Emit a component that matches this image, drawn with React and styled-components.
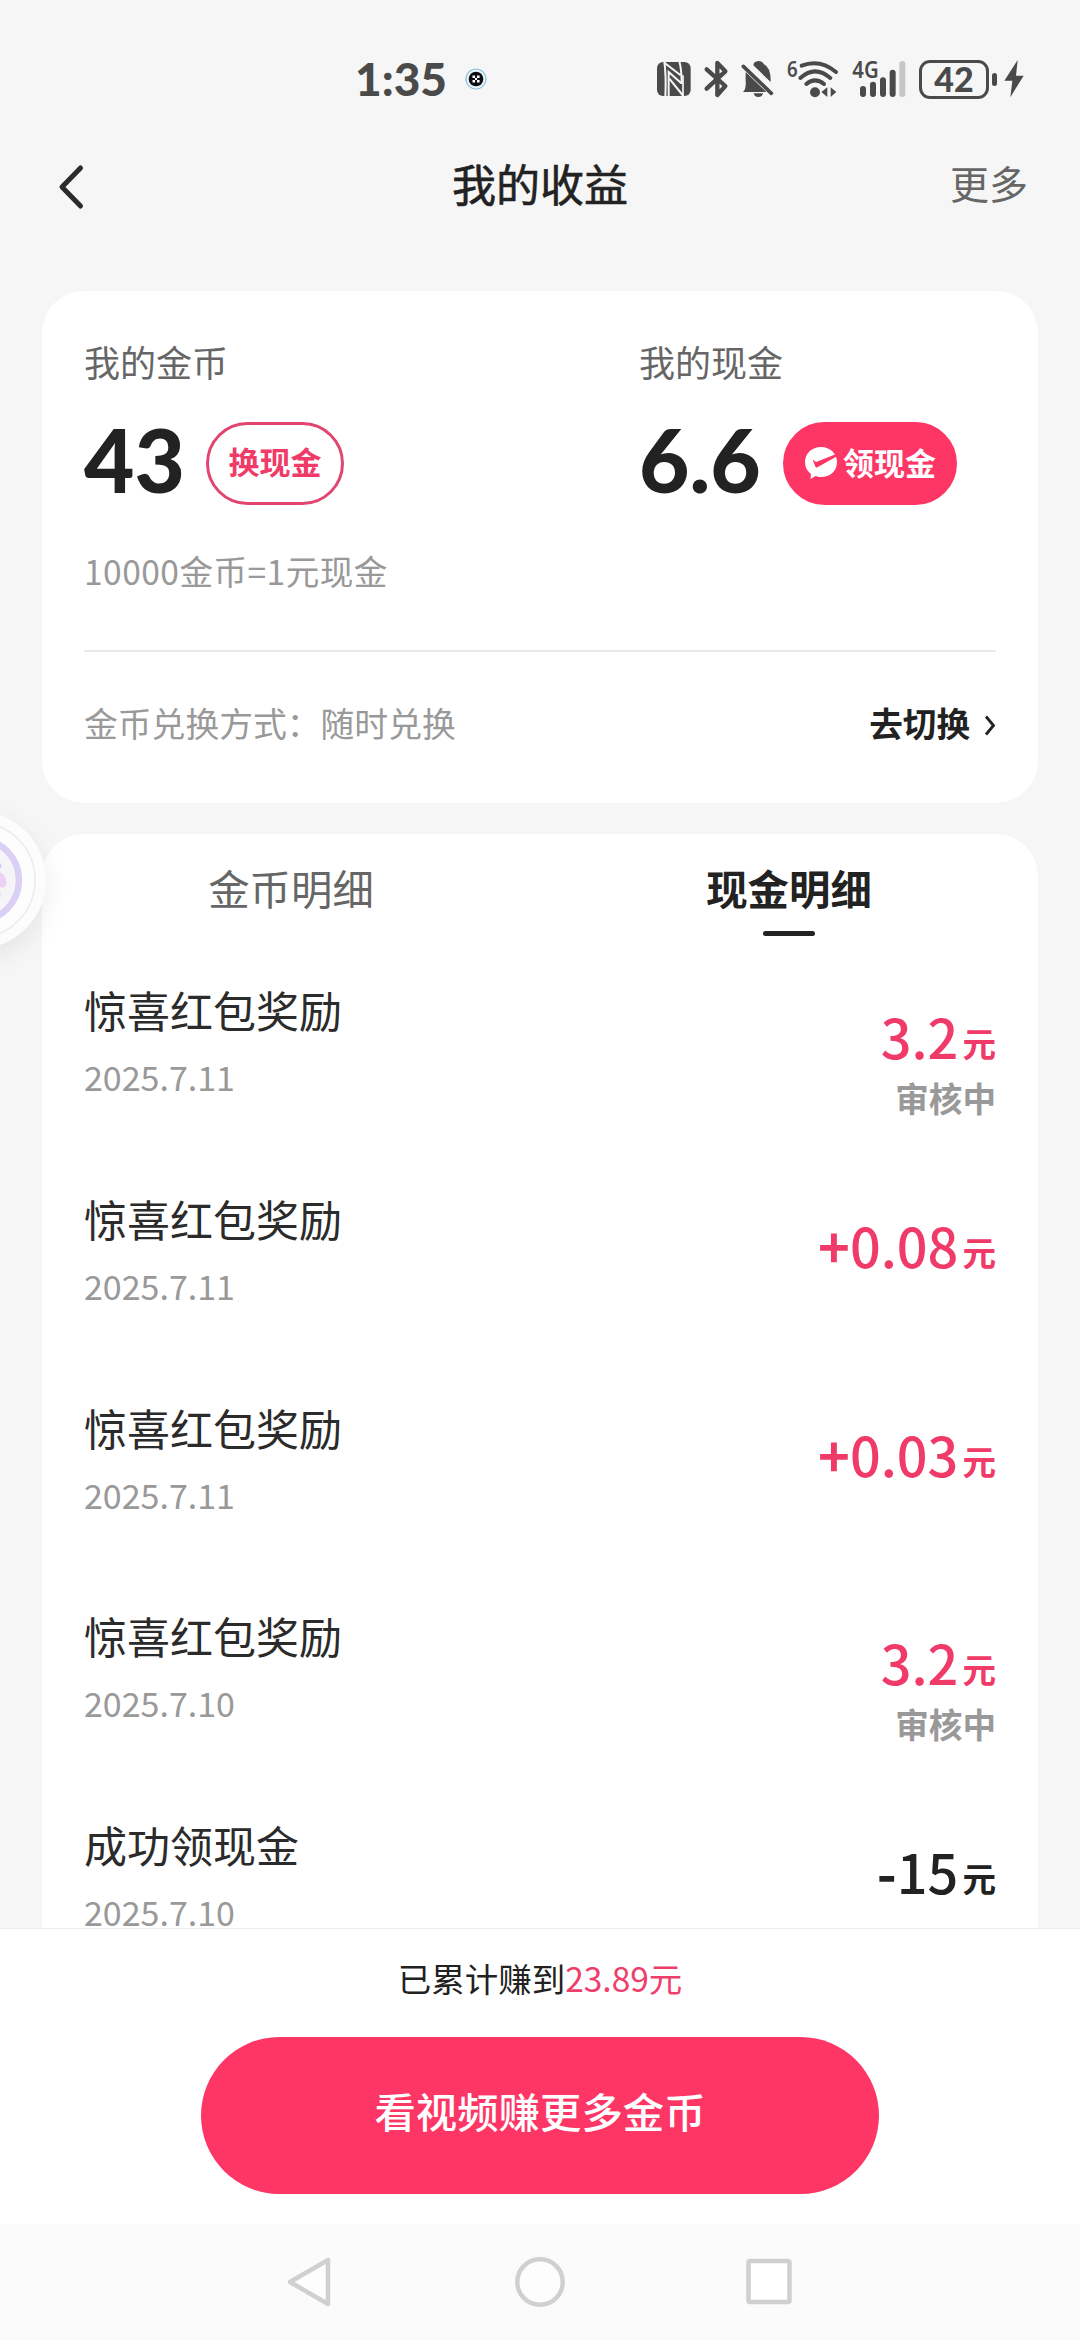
import React from "react";
import styled, { createGlobalStyle } from "styled-components";

const GlobalStyle = createGlobalStyle`
  * {
    box-sizing: border-box;
  }

  body {
    margin: 0;
    background: #f6f6f6;
    font-family: "Noto Sans CJK SC", "Noto Sans", sans-serif;
    color: #222;
  }

  button {
    border: 0;
    padding: 0;
    background: none;
    font-family: inherit;
    color: inherit;
  }

  svg {
    display: block;
    flex: none;
    overflow: visible;
  }
`;

const Page = styled.div`
  width: 1080px;
  height: 2340px;
  display: flex;
  flex-direction: column;
  overflow: hidden;
  background: #f6f6f6;
`;

const StatusBar = styled.div`
  height: 138px;
  padding: 59px 56px 0 355px;
  display: flex;
  align-items: flex-start;
  justify-content: space-between;
`;

const StatusLeft = styled.div`
  display: flex;
  align-items: center;
  gap: 18px;
  height: 40px;
`;

const Clock = styled.div`
  font-family: "Lato", sans-serif;
  font-weight: 900;
  font-size: 46px;
  line-height: 40px;
  color: #4a4a4a;
`;

const StatusIcons = styled.div`
  display: flex;
  gap: 13px;
`;

const Header = styled.div`
  height: 96px;
  padding: 0 52px;
  display: grid;
  grid-template-columns: 1fr auto 1fr;
  align-items: center;
`;

const BackBtn = styled.button`
  justify-self: start;
  margin-left: 4px;
`;

const Title = styled.div`
  font-size: 44px;
  line-height: 60px;
  padding-bottom: 6px;
  -webkit-text-stroke: 0.6px #222;
  color: #222;
`;

const MoreBtn = styled.button`
  justify-self: end;
  font-size: 39px;
  line-height: 60px;
  padding-bottom: 9px;
  color: #666;
`;

const Card = styled.div`
  margin: 0 42px;
  background: #fff;
  border-radius: 42px;
`;

const BalanceCard = styled(Card)`
  height: 512px;
  margin-top: 57px;
  padding: 46px 42px 0;
`;

const Balances = styled.div`
  display: grid;
  grid-template-columns: 555px 1fr;
  height: 171px;
`;

const BalanceLabel = styled.div`
  font-size: 36px;
  line-height: 48px;
  color: #666;
`;

const BalanceRow = styled.div`
  display: flex;
  align-items: center;
  height: 84px;
  margin-top: 36px;
`;

const BalanceValue = styled.div`
  font-family: "Lato", sans-serif;
  font-weight: 900;
  font-size: 87px;
  line-height: 84px;
  height: 90px;
  color: #222;
  width: ${({ $width }) => $width}px;
`;

const PillBtn = styled.button`
  height: 83px;
  width: ${({ $filled }) => ($filled ? 174 : 138)}px;
  border-radius: 42px;
  border: 3px solid ${({ $filled }) => ($filled ? "#fe3666" : "#e2456f")};
  background: ${({ $filled }) => ($filled ? "#fe3666" : "#fff")};
  color: ${({ $filled }) => ($filled ? "#fff" : "#f03a68")};
  font-size: 31px;
  font-weight: 700;
  display: flex;
  justify-content: center;
  align-items: center;
  gap: 5px;

  span {
    padding-bottom: ${({ $filled }) => ($filled ? 3 : 5)}px;
  }
`;

const RateHint = styled.div`
  font-size: 33.6px;
  line-height: 48px;
  margin-top: 39px;
  letter-spacing: 0.45px;
  color: #999;
`;

const ExchangeRow = styled.div`
  display: flex;
  justify-content: space-between;
  align-items: center;
  margin-top: 55px;
  height: 142px;
  border-top: 2px solid #e9e9e9;
  font-size: 33.8px;
  color: #999;
`;

const SwitchBtn = styled.button`
  display: flex;
  align-items: center;
  gap: 14px;
  font-size: 33.6px;
  font-weight: 700;
  color: #222;

  svg {
    margin-top: 6px;
  }
`;

const DetailCard = styled(Card)`
  margin-top: 31px;
  height: 1094px;
  border-radius: 42px 42px 0 0;
  overflow: hidden;
`;

const Tabs = styled.div`
  display: grid;
  grid-template-columns: 1fr 1fr;
  height: 110px;
`;

const Tab = styled.button`
  display: flex;
  flex-direction: column;
  align-items: center;
  padding-top: 23px;
  font-size: 41.4px;
  line-height: 60px;
  font-weight: ${({ $active }) => ($active ? 700 : 400)};
  color: ${({ $active }) => ($active ? "#222" : "#666")};

  &::after {
    content: "";
    display: ${({ $active }) => ($active ? "block" : "none")};
    width: 52px;
    height: 5px;
    margin-top: 14px;
    border-radius: 3px;
    background: #222;
  }
`;

const RecordRow = styled.div`
  display: flex;
  justify-content: space-between;
  height: 208.8px;
  padding: 35px 42px 0;
`;

const RecordName = styled.div`
  font-size: 43px;
  line-height: 60px;
  color: #2b2b2b;
`;

const RecordDate = styled.div`
  font-size: 34px;
  line-height: 40px;
  margin-top: 18px;
  color: #999;
`;

const RecordSide = styled.div`
  padding-top: 27px;
  text-align: right;
`;

const Amount = styled.div`
  font-size: 54px;
  line-height: 60px;
  font-weight: 500;
  color: ${({ $out }) => ($out ? "#222" : "#f03a68")};
`;

const Sign = styled.span`
  font-weight: 700;
`;

const Unit = styled.span`
  font-size: 33.6px;
  line-height: 1;
  font-weight: 700;
  margin-left: 4px;
  vertical-align: 2px;
`;

const RecordStatus = styled.div`
  font-size: 33.6px;
  line-height: 40px;
  font-weight: 700;
  margin-top: 12px;
  color: #999;
`;

const Footer = styled.div`
  height: 296px;
  border-top: 1px solid #ececec;
  background: #fff;
  display: flex;
  flex-direction: column;
  align-items: center;
  padding-top: 24px;
`;

const TotalText = styled.div`
  font-size: 33.5px;
  line-height: 50px;
  color: #222;

  span {
    color: #ee3f6c;
  }
`;

const WatchBtn = styled.button`
  width: 678px;
  height: 157px;
  margin-top: 34px;
  padding-bottom: 12px;
  border-radius: 79px;
  background: #fe3666;
  color: #fff;
  font-size: 41.4px;
  font-weight: 500;
`;

const NavBar = styled.div`
  height: 116px;
  background: #fbfbfb;
  display: flex;
  justify-content: center;
  padding-top: 32px;
  gap: 180px;
`;

// sits over the left edge of the page, half hidden
const FloatBall = styled.div`
  position: absolute;
  left: -92px;
  top: 811px;
  width: 138px;
  height: 138px;
  border-radius: 50%;
  background: #fcfcfc;
  box-shadow: 0 8px 26px rgba(0, 0, 0, 0.08);
`;

const DARK = "#4a4a4a";

const AppDot = () => (
  <svg width="22" height="22" viewBox="0 0 22 22">
    <circle cx="11" cy="11" r="10" fill="#e8f3f8" stroke="#8cc3dc" strokeWidth="1.2" />
    <circle cx="11" cy="11" r="7.3" fill="#0c0c10" />
    <path
      d="M7.5 7.5h2.6v2.6h-2.6zM12 7.5h2.6v2.6h-2.6zM7.5 12h2.6v2.6h-2.6zM12 12h2.6v2.6h-2.6zM10 10h2.1v2.1h-2.1z"
      fill="#fff"
    />
  </svg>
);

const NfcIcon = () => (
  <svg width="34" height="40" viewBox="55 57 102 120">
    <rect x="55" y="66" width="101" height="102" rx="18" fill={DARK} />
    <g fill="none" stroke="#f6f6f6" strokeWidth="6">
      <path d="M77 64Q83 110 80 170" />
      <path d="M77 68L126 106" />
      <path d="M90 170V96L128 130" />
      <path d="M92 116L134 168" />
      <path d="M122 64Q129 90 129 132" />
      <path d="M133 106V170" strokeWidth="5" />
    </g>
  </svg>
);

const BluetoothIcon = () => (
  <svg width="24" height="40" viewBox="198 57 72 120">
    <path
      d="M206 88L262 138L238 165V69L262 94L206 146"
      fill="none"
      stroke={DARK}
      strokeWidth="13"
      strokeLinejoin="round"
      strokeLinecap="round"
    />
  </svg>
);

const MuteIcon = () => (
  <svg width="33" height="40" viewBox="312 57 99 120">
    <path d="M349 76Q350 64 364 63Q378 64 380 72Q402 82 401 126Z" fill={DARK} />
    <path d="M326 96L388 156H318Q328 146 326 124Z" fill={DARK} />
    <path d="M350 160H378Q376 171 364 171Q352 171 350 160Z" fill={DARK} />
    <path d="M319 79L403 160" stroke={DARK} strokeWidth="11" strokeLinecap="round" />
  </svg>
);

const WifiIcon = () => (
  <svg width="52" height="40" viewBox="446 57 156 120">
    <text
      x="446"
      y="110"
      fontSize="66"
      fontWeight="600"
      fontFamily="Noto Sans"
      fill={DARK}
      textLength="32"
      lengthAdjust="spacingAndGlyphs">
      6
    </text>
    <g fill="none" stroke={DARK} strokeWidth="12" strokeLinecap="round">
      <path d="M490 77Q545 56 593 96" />
      <path d="M486 114Q530 74 576 114" />
      <path d="M504 132Q530 110 557 132" />
    </g>
    <circle cx="530" cy="157" r="15" fill={DARK} />
    <path d="M567 142V171L549 156ZM577 142V171L594 156Z" fill={DARK} />
  </svg>
);

const SignalIcon = () => (
  <svg width="54" height="40" viewBox="636 57 162 120">
    <text
      x="637"
      y="114"
      fontSize="68"
      fontWeight="600"
      fontFamily="Noto Sans"
      fill={DARK}
      textLength="79"
      lengthAdjust="spacingAndGlyphs">
      4G
    </text>
    <g stroke={DARK} strokeWidth="18" strokeLinecap="round">
      <path d="M669 147V162M699 134V162M729 121V162M758 98V162" />
      <path d="M787 72V162" stroke="#c6c6c6" />
    </g>
  </svg>
);

const BatteryBox = styled.div`
  display: flex;
  align-items: center;
  gap: 3px;
  height: 40px;
  margin-right: -6px;
`;

const BatteryShell = styled.div`
  width: 70px;
  height: 39px;
  border: 3px solid ${DARK};
  border-radius: 11px;
  font-family: "Lato", sans-serif;
  font-weight: 900;
  font-size: 34px;
  line-height: 32px;
  text-align: center;
  color: ${DARK};
`;

const BatteryCap = styled.div`
  width: 5px;
  height: 13px;
  border-radius: 3px;
  background: ${DARK};
`;

const BoltIcon = () => (
  <svg width="20" height="40" viewBox="1094 57 60 120">
    <path d="M1135 60L1095 122H1119L1113 172L1153 107H1130Z" fill={DARK} />
  </svg>
);

const CheckBubble = () => (
  <svg width="34" height="34" viewBox="0 0 34 34">
    <path
      d="M17 1C26 1 33 7.500 33 16C33 25 26 31 17 31C14.500 31 13 30.500 11.500 30L6.500 33L7 28C3 25 1 21 1 16C1 7.500 8 1 17 1Z"
      fill="#fff"
    />
    <path d="M8.500 13.500L12 16L31 8.500L33.500 10L13 21.500Q12 22 11.300 20.500Z" fill="#fe3666" />
  </svg>
);

const records = [
  { id: 1, name: "惊喜红包奖励", date: "2025.7.11", amount: "3.2", status: "审核中" },
  { id: 2, name: "惊喜红包奖励", date: "2025.7.11", sign: "+", amount: "0.08" },
  { id: 3, name: "惊喜红包奖励", date: "2025.7.11", sign: "+", amount: "0.03" },
  { id: 4, name: "惊喜红包奖励", date: "2025.7.10", amount: "3.2", status: "审核中" },
  { id: 5, name: "成功领现金", date: "2025.7.10", sign: "-", amount: "15", out: true },
];

const Record = ({ record }) => (
  <RecordRow>
    <div>
      <RecordName>{record.name}</RecordName>
      <RecordDate>{record.date}</RecordDate>
    </div>
    <RecordSide>
      <Amount $out={record.out}>
        {record.sign && <Sign>{record.sign}</Sign>}
        {record.amount}
        <Unit>元</Unit>
      </Amount>
      {record.status && <RecordStatus>{record.status}</RecordStatus>}
    </RecordSide>
  </RecordRow>
);

const App = () => {
  return (
    <>
      <GlobalStyle />
      <Page>
        <StatusBar>
          <StatusLeft>
            <Clock>1:35</Clock>
            <AppDot />
          </StatusLeft>
          <StatusIcons>
            <NfcIcon />
            <BluetoothIcon />
            <MuteIcon />
            <WifiIcon />
            <SignalIcon />
            <BatteryBox>
              <BatteryShell>42</BatteryShell>
              <BatteryCap />
            </BatteryBox>
            <BoltIcon />
          </StatusIcons>
        </StatusBar>

        <Header>
          <BackBtn type="button">
            <svg width="30" height="46" viewBox="0 0 30 46">
              <path
                d="M24.500 5L6 24L24.500 43"
                fill="none"
                stroke="#2b2b2b"
                strokeWidth="5"
                strokeLinecap="round"
                strokeLinejoin="round"
              />
            </svg>
          </BackBtn>
          <Title>我的收益</Title>
          <MoreBtn type="button">更多</MoreBtn>
        </Header>

        <BalanceCard>
          <Balances>
            <div>
              <BalanceLabel>我的金币</BalanceLabel>
              <BalanceRow>
                <BalanceValue $width={122}>43</BalanceValue>
                <PillBtn type="button">
                  <span>换现金</span>
                </PillBtn>
              </BalanceRow>
            </div>
            <div>
              <BalanceLabel>我的现金</BalanceLabel>
              <BalanceRow>
                <BalanceValue $width={144}>6.6</BalanceValue>
                <PillBtn type="button" $filled>
                  <CheckBubble />
                  <span>领现金</span>
                </PillBtn>
              </BalanceRow>
            </div>
          </Balances>
          <RateHint>10000金币=1元现金</RateHint>
          <ExchangeRow>
            <div>金币兑换方式：随时兑换</div>
            <SwitchBtn type="button">
              去切换
              <svg width="12" height="22" viewBox="0 0 12 22">
                <path d="M2 2.500L9.500 11.500L2 20.500" fill="none" stroke="#222" strokeWidth="2.800" />
              </svg>
            </SwitchBtn>
          </ExchangeRow>
        </BalanceCard>

        <DetailCard>
          <Tabs>
            <Tab type="button">金币明细</Tab>
            <Tab type="button" $active>
              现金明细
            </Tab>
          </Tabs>
          {records.map((record) => (
            <Record key={record.id} record={record} />
          ))}
        </DetailCard>

        <Footer>
          <TotalText>
            已累计赚到<span>23.89元</span>
          </TotalText>
          <WatchBtn type="button">看视频赚更多金币</WatchBtn>
        </Footer>

        <NavBar>
          <svg width="50" height="52" viewBox="0 0 50 52">
            <path
              d="M43 4V48L5 26Z"
              fill="#fdfdfd"
              stroke="#d0d0d0"
              strokeWidth="4.500"
              strokeLinejoin="round"
            />
          </svg>
          <svg width="50" height="52" viewBox="0 0 50 52">
            <circle cx="25" cy="26" r="22.700" fill="#fdfdfd" stroke="#d0d0d0" strokeWidth="4.500" />
          </svg>
          <svg width="50" height="52" viewBox="0 0 50 52">
            <rect
              x="3.500"
              y="5"
              width="41"
              height="41"
              rx="1.500"
              fill="#fff"
              stroke="#d0d0d0"
              strokeWidth="4.500"
            />
          </svg>
        </NavBar>
      </Page>

      <FloatBall>
        <svg width="138" height="138" viewBox="0 0 138 138">
          <circle cx="69" cy="69" r="58" fill="#fdfdfd" stroke="#ebebee" strokeWidth="1.500" />
          <circle cx="70" cy="69" r="41" fill="#f5f5f7" stroke="#dacff5" strokeWidth="6.500" />
          <ellipse cx="93" cy="69" rx="5" ry="8" fill="#ecd0f6" transform="rotate(-20 93 69)" />
          <circle cx="91" cy="55" r="2.500" fill="#d9c8ee" />
          <circle cx="91" cy="83" r="2.500" fill="#f3dff0" />
        </svg>
      </FloatBall>
    </>
  );
};

export default App;
